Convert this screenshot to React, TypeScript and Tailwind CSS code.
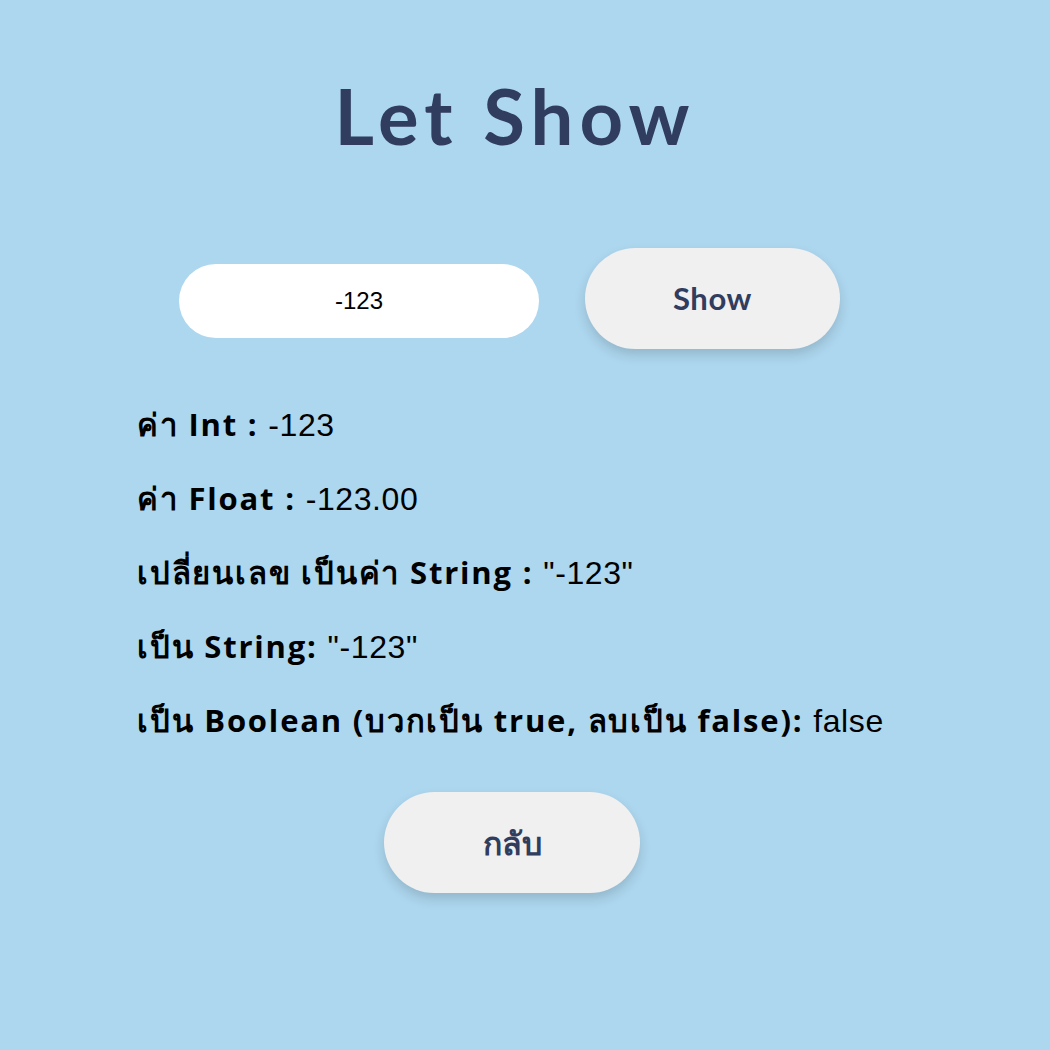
import { useState } from "react";

const rows = [
  { label: "ค่า Int : ", value: "-123" },
  { label: "ค่า Float : ", value: "-123.00" },
  { label: "เปลี่ยนเลข เป็นค่า String : ", value: '"-123"' },
  { label: "เป็น String: ", value: '"-123"' },
  { label: "เป็น Boolean (บวกเป็น true, ลบเป็น false): ", value: "false" },
];

export default function App() {
  const [num, setNum] = useState("-123");

  return (
    <div className="min-h-[1050px] w-full bg-[#add7ef] text-black">
      <div className="w-[1024px] font-['Lato','Noto_Sans',sans-serif]">
        <div className="flex flex-col items-center pt-[68px]">
          <h1 className="text-[76px] leading-[96px] font-bold text-[#303d5e] tracking-[0.08em] pl-[0.08em]">
            Let Show
          </h1>

          <div className="mt-[86px] flex items-center gap-[46px] pr-[5px]">
            <input
              value={num}
              onChange={(e) => setNum(e.target.value)}
              className="w-[360px] h-[74px] rounded-full bg-white text-center text-[24px] font-['Liberation_Sans',sans-serif] outline-none"
            />
            <button className="w-[255px] h-[101px] -translate-y-[2px] rounded-full bg-[#f0f0f0] shadow-[0_6px_12px_rgba(0,0,0,0.15)] text-[31px] font-bold text-[#303d5e] tracking-[0.02em]">
              Show
            </button>
          </div>
        </div>

        <div className="mt-[51px] pl-[137px] flex flex-col gap-[30px]">
          {rows.map((row, i) => (
            <p key={i} className="h-[44px] text-[31px] leading-[44px] whitespace-nowrap">
              <span className="font-bold font-['Open_Sans','Lato',sans-serif] tracking-[1.8px]">{row.label}</span>
              <span className="text-[32px] tracking-[0.6px] font-['Liberation_Sans','Noto_Sans',sans-serif]">{row.value}</span>
            </p>
          ))}
        </div>

        <div className="flex justify-center mt-[50px]">
          <button className="w-[256px] h-[101px] rounded-full bg-[#f0f0f0] shadow-[0_6px_12px_rgba(0,0,0,0.15)] text-[32px] font-bold text-[#303d5e]">
            กลับ
          </button>
        </div>
      </div>
    </div>
  );
}
